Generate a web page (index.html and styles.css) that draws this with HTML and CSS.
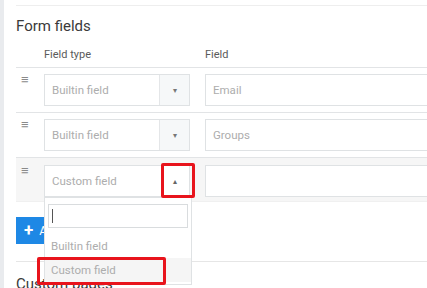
FILE: index.html
```html
<!DOCTYPE html>
<html lang="en">
<head>
    <meta charset="UTF-8">
    <title>Form fields</title>
    <link rel="stylesheet" href="styles.css">
</head>
<body>
    <div class="rail"></div>

    <div class="main">
        <div class="top-rule"></div>

        <h2 class="section-title">Form fields</h2>

        <div class="fields">
            <div class="fields-head">
                <span class="col-handle"></span>
                <span class="col-type">Field type</span>
                <span class="col-field">Field</span>
            </div>

            <div class="field-row">
                <span class="handle">&#8801;</span>
                <div class="select">
                    <span class="select-value">Builtin field</span>
                    <span class="select-arrow">&#9662;</span>
                </div>
                <div class="input">Email</div>
            </div>

            <div class="field-row">
                <span class="handle">&#8801;</span>
                <div class="select">
                    <span class="select-value">Builtin field</span>
                    <span class="select-arrow">&#9662;</span>
                </div>
                <div class="input">Groups</div>
            </div>

            <div class="field-row active">
                <span class="handle">&#8801;</span>
                <div class="select open">
                    <span class="select-value">Custom field</span>
                    <span class="select-arrow">&#9652;</span>
                    <span class="mark mark-arrow"></span>

                    <div class="dropdown">
                        <div class="dropdown-search"><span class="caret"></span></div>
                        <div class="option">Builtin field</div>
                        <div class="option selected">Custom field</div>
                        <span class="mark mark-option"></span>
                    </div>
                </div>
                <div class="input"></div>
            </div>
        </div>

        <button class="add-btn"><span class="plus">+</span> Add field</button>

        <div class="section-rule"></div>
        <h2 class="section-title next">Custom pages</h2>
    </div>
</body>
</html>
```

FILE: styles.css
```css
* {
    margin: 0;
    padding: 0;
    box-sizing: border-box;
}

body {
    font-family: Roboto, "Liberation Sans", sans-serif;
    background-color: #fff;
    color: #333;
    display: flex;
    height: 288px;
    overflow: hidden;
}

.rail {
    width: 4px;
    flex-shrink: 0;
    background-color: #e9ebee;
}

.main {
    flex: 1;
    padding: 5px 0 0 12px;
    overflow: hidden;
}

.top-rule {
    border-top: 1px solid #eeeeee;
}

.section-title {
    font-size: 15px;
    font-weight: 400;
    color: #3a3a3a;
    line-height: 18px;
    margin-top: 11px;
}

/* table of fields */

.fields {
    margin-top: 4px;
    width: 560px;
}

.fields-head {
    display: flex;
    align-items: center;
    height: 28px;
    font-size: 11px;
    color: #5a5a5a;
    padding-top: 2px;
}

.col-handle {
    width: 28px;
}

.col-type {
    width: 161px;
}

.field-row {
    display: flex;
    align-items: flex-start;
    border-top: 1px solid #e2e4e6;
    padding: 6px 0;
    height: 45px;
}

.field-row.active {
    background-color: #f6f6f6;
    border-bottom: 1px solid #f0f0f0;
    padding-top: 7px;
}

.handle {
    width: 28px;
    color: #8a8a8a;
    font-size: 13px;
    line-height: 12px;
    padding-left: 5px;
}

.select {
    position: relative;
    width: 146px;
    height: 32px;
    display: flex;
    border: 1px solid #dfe2e4;
    background-color: #fff;
    font-size: 11.5px;
    color: #adadad;
}

.select-value {
    flex: 1;
    display: flex;
    align-items: center;
    padding-left: 7px;
}

.select-arrow {
    width: 30px;
    display: flex;
    align-items: center;
    justify-content: center;
    background-color: #f6f8f9;
    border-left: 1px solid #e4e6e8;
    color: #777;
    font-size: 8px;
}

.select.open .select-arrow {
    background-color: #fff;
    border-left-color: #fff;
    color: #666;
}

.input {
    width: 340px;
    height: 32px;
    margin-left: 15px;
    border: 1px solid #dfe2e4;
    background-color: #fff;
    display: flex;
    align-items: center;
    padding-left: 7px;
    font-size: 11.5px;
    color: #adadad;
}

/* open dropdown */

.dropdown {
    position: absolute;
    top: 31px;
    left: -1px;
    width: 148px;
    height: 88px;
    background-color: #fff;
    border: 1px solid #dfe2e4;
    padding-top: 6px;
    z-index: 5;
}

.dropdown-search {
    margin: 0 3px 6px 3px;
    height: 24px;
    border: 1px solid #d9dcde;
    padding: 4px 0 0 3px;
}

.caret {
    display: block;
    width: 1px;
    height: 14px;
    background-color: #555;
}

.option {
    height: 24px;
    line-height: 24px;
    padding-left: 6px;
    font-size: 11.5px;
    color: #adadad;
}

.option.selected {
    background-color: #f5f5f5;
}

/* annotation boxes */

.mark {
    position: absolute;
    border: 3px solid #e8141c;
    border-radius: 2px;
    z-index: 6;
}

.mark-arrow {
    left: 116px;
    top: -3px;
    width: 34px;
    height: 35px;
}

.mark-option {
    left: -8px;
    top: 59px;
    width: 129px;
    height: 28px;
}

/* add button */

.add-btn {
    margin-top: 15px;
    height: 27px;
    padding: 0 10px 0 8px;
    border: none;
    background-color: #1e88e5;
    color: #fff;
    font-family: inherit;
    font-size: 12px;
    display: flex;
    align-items: center;
    gap: 6px;
}

.plus {
    font-size: 17px;
    font-weight: 700;
    line-height: 1;
}

.section-rule {
    margin-top: 17px;
    border-top: 1px solid #e6e6e6;
}

.section-title.next {
    margin-top: 13px;
}
```
